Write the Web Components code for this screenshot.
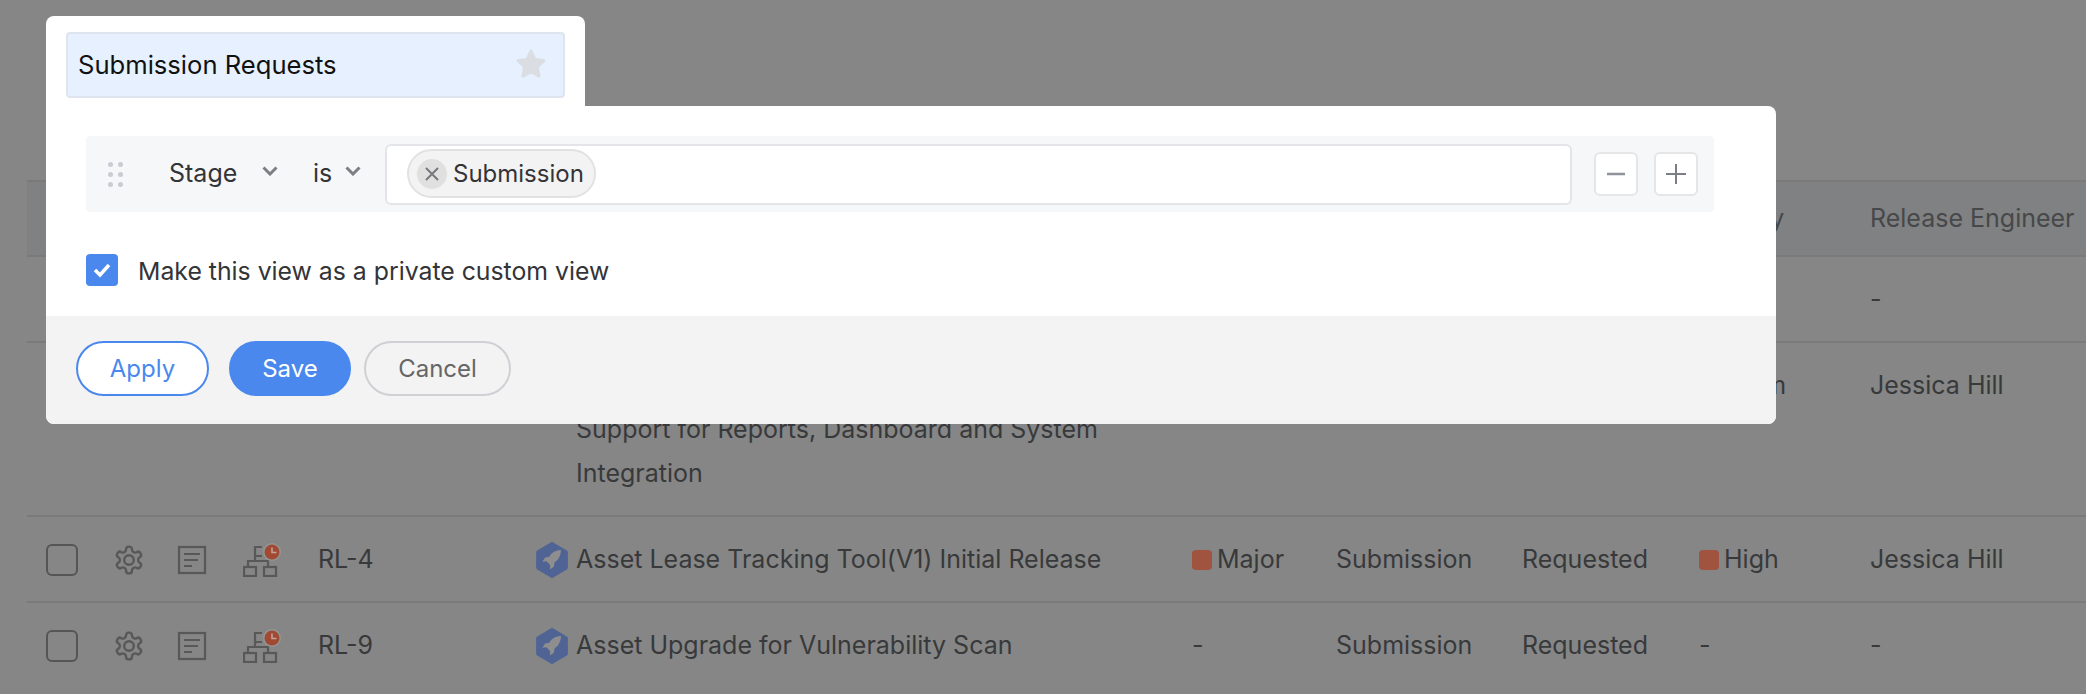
<!DOCTYPE html>
<html>
<head>
<meta charset="utf-8">
<style>
  html, body { margin: 0; height: 100%; overflow: hidden; background: #868686; }
  body { font-family: Inter, "Noto Sans", sans-serif; font-size: 24px; }
</style>
</head>
<body>
<release-table>
  <release-row head priority="Priority" engineer="Release Engineer"></release-row>
  <release-row engineer="-"></release-row>
  <release-row priority="<span style='margin-left:-8px'>Medium</span>" engineer="Jessica Hill">&nbsp;<br>Support for Reports, Dashboard and System<br>Integration</release-row>
  <release-row code="RL-4" type="Major" stage="Submission" status="Requested" priority="High" flag engineer="Jessica Hill">Asset Lease Tracking Tool(V1) Initial Release</release-row>
  <release-row code="RL-9" type="-" stage="Submission" status="Requested" priority="-" engineer="-">Asset Upgrade for Vulnerability Scan</release-row>
</release-table>

<filter-dialog>
  <filter-row field="Stage" operator="is" value="Submission"></filter-row>
</filter-dialog>

<script>
const GEAR = `<svg width="32" height="32" viewBox="0 0 24 24" fill="none" stroke="#585858" stroke-width="1.8">
  <path d="M12.22 2h-.44a2 2 0 0 0-2 2v.18a2 2 0 0 1-1 1.73l-.43.25a2 2 0 0 1-2 0l-.15-.08a2 2 0 0 0-2.73.73l-.22.38a2 2 0 0 0 .73 2.73l.15.1a2 2 0 0 1 1 1.72v.51a2 2 0 0 1-1 1.74l-.15.09a2 2 0 0 0-.73 2.73l.22.38a2 2 0 0 0 2.73.73l.15-.08a2 2 0 0 1 2 0l.43.25a2 2 0 0 1 1 1.73V20a2 2 0 0 0 2 2h.44a2 2 0 0 0 2-2v-.18a2 2 0 0 1 1-1.73l.43-.25a2 2 0 0 1 2 0l.15.08a2 2 0 0 0 2.73-.73l.22-.39a2 2 0 0 0-.73-2.73l-.15-.08a2 2 0 0 1-1-1.74v-.5a2 2 0 0 1 1-1.74l.15-.09a2 2 0 0 0 .73-2.73l-.22-.38a2 2 0 0 0-2.73-.73l-.15.08a2 2 0 0 1-2 0l-.43-.25a2 2 0 0 1-1-1.73V4a2 2 0 0 0-2-2z"/>
  <circle cx="12" cy="12" r="3.6"/></svg>`;

const DOC = `<svg width="30" height="30" viewBox="0 0 30 30" fill="none" stroke="#585858" stroke-width="2.200">
  <rect x="2" y="2" width="26" height="26"/>
  <path d="M7 9h16M7 15h14M7 21h8"/></svg>`;

const TREE = `<svg width="38" height="34" viewBox="0 0 38 34" fill="none" stroke="#585858" stroke-width="2.200">
  <path d="M19 4h-7v9h7M12 13v5M5 24v-6h20v6"/>
  <rect x="1" y="24" width="12" height="9"/>
  <rect x="21" y="24" width="12" height="9"/>
  <circle cx="29" cy="9" r="9" fill="#959595" stroke="none"/>
  <circle cx="29" cy="9" r="7.500" fill="#a04a33" stroke="none"/>
  <path d="M29 4.500V9.500h4.500" stroke="#c4a298" stroke-width="1.600"/></svg>`;

const HEX = `<svg width="36" height="40" viewBox="0 0 34 36" preserveAspectRatio="none">
  <path d="M17 1.500 31 9.500a2 2 0 0 1 1 1.700v13.600a2 2 0 0 1-1 1.700L17 34.500 3 26.500a2 2 0 0 1-1-1.700V11.200a2 2 0 0 1 1-1.700z" fill="#4f6494"/>
  <path d="M25 9c-5 .3-8.500 2.500-10.500 6l-4 .8L8 19.500l3.800-.3 3.500 3.500-.3 3.800 3.700-2.500.8-4c3.500-2 5.700-5.500 6-11z" fill="#8e8e8e"/></svg>`;

class ReleaseTable extends HTMLElement {
  constructor() {
    super();
    this.shadowDOM = this.attachShadow({ mode: "open" });
    this.shadowDOM.innerHTML = `
    <style>
      :host {
        display: block;
        margin-left: 27px;
        padding-top: 180px;
        color: #38393b;
        font-size: 25px;
        --cols: 19px 67px 64px 66px 75px 216px 42px 616px 144px 186px 177px 171px 1fr;
      }
    </style>
    <slot></slot>`;
  }
}

class ReleaseRow extends HTMLElement {
  constructor() {
    super();
    this.shadowDOM = this.attachShadow({ mode: "open" });
  }

  connectedCallback() {
    this.render();
  }

  cell(name, mark) {
    const value = this.getAttribute(name);
    if (!value) return "<div></div>";
    const withMark = mark && value !== "-";
    return `<div class="cell">${withMark ? '<span class="mark"></span>' : ""}${value}</div>`;
  }

  render() {
    const code = this.getAttribute("code");
    const icons = code
      ? `<div class="ic"><span class="box"></span></div>
         <div class="ic">${GEAR}</div>
         <div class="ic">${DOC}</div>
         <div class="ic">${TREE}</div>
         <div class="cell">${code}</div>
         <div class="ic">${HEX}</div>`
      : "<div></div><div></div><div></div><div></div><div></div><div></div>";
    this.shadowDOM.innerHTML = `
    <style>
      :host {
        display: grid;
        grid-template-columns: var(--cols);
        align-items: start;
        border-top: 2px solid #7a7a7a;
        padding: 21px 0 19px;
        line-height: 44px;
      }
      :host([head]) {
        background: #808182;
        padding: 10px 0 9px;
        color: #47484a;
        line-height: 54px;
      }
      .spacer { grid-column: 1; }
      .cell { display: flex; align-items: center; gap: 5px; white-space: nowrap; margin: -1px 0 1px; }
      .title { white-space: nowrap; margin: -1px 0 1px; }
      .ic { display: flex; align-items: center; justify-content: flex-start; height: 44px; }
      .box { width: 28px; height: 28px; border: 2px solid #555; border-radius: 6px; }
      .mark { width: 20px; height: 20px; border-radius: 4px; background: #a05440; margin-top: 1px; }
    </style>
    <div class="spacer"></div>
    ${icons}
    <div class="title"><slot></slot></div>
    ${this.cell("type", true)}
    ${this.cell("stage")}
    ${this.cell("status")}
    ${this.cell("priority", this.hasAttribute("flag"))}
    ${this.cell("engineer")}`;
  }
}

class FilterRow extends HTMLElement {
  constructor() {
    super();
    this.shadowDOM = this.attachShadow({ mode: "open" });
  }

  connectedCallback() {
    this.render();
  }

  render() {
    const chevron = `<svg class="chev" width="16" height="10" viewBox="0 0 16 10" fill="none" stroke="#7d7f83" stroke-width="3"><path d="M1.500 1.500 8 8l6.500-6.500"/></svg>`;
    this.shadowDOM.innerHTML = `
    <style>
      :host {
        display: flex;
        align-items: center;
        height: 76px;
        padding-left: 22px;
        background: #f6f7f9;
        border-radius: 4px;
        color: #333438;
      }
      .dots { display: grid; grid-template-columns: 5px 5px; gap: 5px 5px; width: 15px; margin-right: 46px; }
      .dots i { width: 5px; height: 5px; border-radius: 50%; background: #c9ccd1; }
      .chev { margin-top: -6px; }
      .field { width: 93px; font-size: 25px; margin-top: -2px; }
      .field + .chev { margin-right: 35px; }
      .op { width: 32px; font-size: 25px; margin-top: -2px; }
      .op + .chev { margin-right: 24px; }
      .input {
        box-sizing: border-box;
        width: 1187px;
        height: 61px;
        padding-left: 20px;
        display: flex;
        align-items: center;
        background: #fff;
        border: 2px solid #e3e5e8;
        border-radius: 6px;
      }
      .chip {
        box-sizing: border-box;
        height: 49px;
        padding: 0 10px 0 8px;
        display: flex;
        align-items: center;
        gap: 6px;
        margin-top: -1px;
        background: #f3f3f3;
        border: 2px solid #e2e2e2;
        border-radius: 25px;
      }
      .x {
        width: 30px;
        height: 30px;
        border-radius: 50%;
        background: #e0e0e0;
        display: flex;
        align-items: center;
        justify-content: center;
      }
      .btn {
        box-sizing: border-box;
        width: 44px;
        height: 44px;
        margin-left: 22px;
        display: flex;
        align-items: center;
        justify-content: center;
        background: #fff;
        border: 2px solid #e5e6e8;
        border-radius: 6px;
      }
      .btn + .btn { margin-left: 16px; }
    </style>
    <div class="dots"><i></i><i></i><i></i><i></i><i></i><i></i></div>
    <div class="field">${this.getAttribute("field")}</div>${chevron}
    <div class="op">${this.getAttribute("operator")}</div>${chevron}
    <div class="input">
      <div class="chip">
        <span class="x"><svg width="16" height="16" viewBox="0 0 16 16" stroke="#77797d" stroke-width="2"><path d="M2 2l12 12M14 2 2 14"/></svg></span>
        ${this.getAttribute("value")}
      </div>
    </div>
    <div class="btn"><svg width="20" height="4" viewBox="0 0 20 4"><path d="M1 2h18" stroke="#90949a" stroke-width="2.500"/></svg></div>
    <div class="btn"><svg width="22" height="22" viewBox="0 0 22 22" stroke="#7b7f85" stroke-width="2"><path d="M1 11h20M11 1v20"/></svg></div>`;
  }
}

class PillButton extends HTMLElement {
  constructor() {
    super();
    this.shadowDOM = this.attachShadow({ mode: "open" });
    this.shadowDOM.innerHTML = `
    <style>
      :host {
        box-sizing: border-box;
        display: flex;
        align-items: center;
        justify-content: center;
        height: 55px;
        border-radius: 28px;
        border: 2px solid #ced0d4;
        color: #666;
        background: transparent;
      }
      :host([kind="outline"]) { width: 133px; border-color: #4a88ee; color: #4a88ee; background: #fff; }
      :host([kind="solid"]) { width: 122px; margin: 0 13px 0 20px; border-color: #4a88ee; color: #fff; background: #4a88ee; }
      :host(:not([kind])) { width: 147px; }
    </style>
    <slot></slot>`;
  }
}

class FilterDialog extends HTMLElement {
  constructor() {
    super();
    this.shadowDOM = this.attachShadow({ mode: "open" });
    this.shadowDOM.innerHTML = `
    <style>
      :host {
        position: absolute;
        left: 46px;
        top: 16px;
        width: 1730px;
        display: flex;
        flex-direction: column;
      }
      .tab {
        box-sizing: border-box;
        width: 539px;
        height: 90px;
        padding: 16px 20px 0;
        background: #fff;
        border-radius: 8px 8px 0 0;
      }
      .name {
        box-sizing: border-box;
        height: 66px;
        padding: 0 15px 2px 10px;
        display: flex;
        align-items: center;
        justify-content: space-between;
        background: #e6f0fe;
        border: 2px solid #dfe5ee;
        border-radius: 4px;
        color: #111;
        font-size: 25.6px;
      }
      .panel { background: #fff; border-radius: 0 8px 8px 8px; overflow: hidden; }
      .body { height: 210px; box-sizing: border-box; padding: 30px 62px 0 40px; }
      .private {
        display: flex;
        align-items: center;
        gap: 20px;
        margin-top: 43px;
        color: #333438;
        font-size: 24.8px;
      }
      .label { padding-top: 1px; }
      .check {
        width: 32px;
        height: 32px;
        margin-top: -1px;
        border-radius: 4px;
        background: #4a88ee;
        display: flex;
        align-items: center;
        justify-content: center;
      }
      .foot {
        height: 108px;
        box-sizing: border-box;
        padding: 25px 30px 0;
        display: flex;
        align-items: flex-start;
        background: #f3f3f3;
      }
    </style>
    <div class="tab">
      <div class="name">
        Submission Requests
        <svg width="34" height="34" viewBox="0 0 32 32"><path d="M16 4l3.600 7.900 8.400 1-6.200 5.800 1.700 8.600L16 23l-7.500 4.300 1.700-8.600L4 12.900l8.400-1z" fill="#dadde2" stroke="#dadde2" stroke-width="3" stroke-linejoin="round"/></svg>
      </div>
    </div>
    <div class="panel">
      <div class="body">
        <slot></slot>
        <div class="private">
          <span class="check"><svg width="20" height="16" viewBox="0 0 20 16" fill="none" stroke="#fff" stroke-width="3.500"><path d="M3 8l5 5 9-10"/></svg></span>
          <div class="label">Make this view as a private custom view</div>
        </div>
      </div>
      <div class="foot">
        <pill-button kind="outline">Apply</pill-button>
        <pill-button kind="solid">Save</pill-button>
        <pill-button>Cancel</pill-button>
      </div>
    </div>`;
  }
}

customElements.define("release-table", ReleaseTable);
customElements.define("release-row", ReleaseRow);
customElements.define("filter-row", FilterRow);
customElements.define("pill-button", PillButton);
customElements.define("filter-dialog", FilterDialog);
</script>
</body>
</html>
